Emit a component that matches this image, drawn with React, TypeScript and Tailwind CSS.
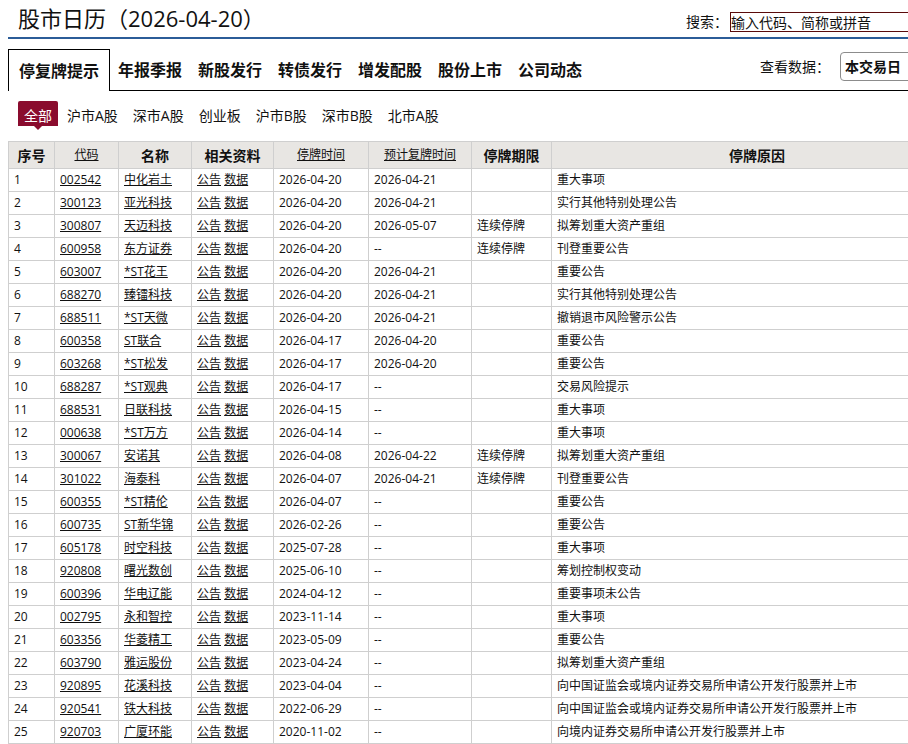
import React from 'react';

type Row = [string, string, string, string, string, string];

const ROWS: Row[] = [
  ['002542', '中化岩土', '2026-04-20', '2026-04-21', '', '重大事项'],
  ['300123', '亚光科技', '2026-04-20', '2026-04-21', '', '实行其他特别处理公告'],
  ['300807', '天迈科技', '2026-04-20', '2026-05-07', '连续停牌', '拟筹划重大资产重组'],
  ['600958', '东方证券', '2026-04-20', '--', '连续停牌', '刊登重要公告'],
  ['603007', '*ST花王', '2026-04-20', '2026-04-21', '', '重要公告'],
  ['688270', '臻镭科技', '2026-04-20', '2026-04-21', '', '实行其他特别处理公告'],
  ['688511', '*ST天微', '2026-04-20', '2026-04-21', '', '撤销退市风险警示公告'],
  ['600358', 'ST联合', '2026-04-17', '2026-04-20', '', '重要公告'],
  ['603268', '*ST松发', '2026-04-17', '2026-04-20', '', '重要公告'],
  ['688287', '*ST观典', '2026-04-17', '--', '', '交易风险提示'],
  ['688531', '日联科技', '2026-04-15', '--', '', '重大事项'],
  ['000638', '*ST万方', '2026-04-14', '--', '', '重大事项'],
  ['300067', '安诺其', '2026-04-08', '2026-04-22', '连续停牌', '拟筹划重大资产重组'],
  ['301022', '海泰科', '2026-04-07', '2026-04-21', '连续停牌', '刊登重要公告'],
  ['600355', '*ST精伦', '2026-04-07', '--', '', '重要公告'],
  ['600735', 'ST新华锦', '2026-02-26', '--', '', '重要公告'],
  ['605178', '时空科技', '2025-07-28', '--', '', '重大事项'],
  ['920808', '曙光数创', '2025-06-10', '--', '', '筹划控制权变动'],
  ['600396', '华电辽能', '2024-04-12', '--', '', '重要事项未公告'],
  ['002795', '永和智控', '2023-11-14', '--', '', '重大事项'],
  ['603356', '华菱精工', '2023-05-09', '--', '', '重要公告'],
  ['603790', '雅运股份', '2023-04-24', '--', '', '拟筹划重大资产重组'],
  ['920895', '花溪科技', '2023-04-04', '--', '', '向中国证监会或境内证券交易所申请公开发行股票并上市'],
  ['920541', '铁大科技', '2022-06-29', '--', '', '向中国证监会或境内证券交易所申请公开发行股票并上市'],
  ['920703', '广厦环能', '2020-11-02', '--', '', '向境内证券交易所申请公开发行股票并上市'],
];

const TABS = ['年报季报', '新股发行', '转债发行', '增发配股', '股份上市', '公司动态'];
const MARKETS = ['沪市A股', '深市A股', '创业板', '沪市B股', '深市B股', '北市A股'];

const th = 'h-[27px] border border-[#cfcfcf] bg-[#e8e6e3] text-center align-middle';
const td = 'h-[23px] border border-[#cfcfcf] px-[5px] text-[12px] align-middle whitespace-nowrap';

const App: React.FC = () => {
  return (
    <div className="h-[744px] w-[908px] overflow-hidden bg-white text-[#111] font-['Open_Sans','Noto_Sans_CJK_SC',sans-serif]">
      <div className="ml-2 w-[954px]">
        {/* title + search */}
        <div className="flex h-[37px] items-end justify-between">
          <h1 className="self-start pl-[10px] text-[22px] leading-[36px] font-normal">股市日历（2026-04-20）</h1>
          <div className="flex items-center pb-[5px] text-[14px]">
            <span className="mr-[2px]">搜索：</span>
            <input
              readOnly
              value="输入代码、简称或拼音"
              className="h-[20px] w-[232px] border border-[#5a0b0b] px-0 text-[14px] leading-[18px] text-[#111] outline-none"
            />
          </div>
        </div>
        <div className="h-[2px] bg-[#2b5c98]" />

        {/* main tabs */}
        <div className="mt-[10px] flex h-[42px] items-start border-b border-black">
          <div className="flex h-[42px] items-center border-x border-t border-black bg-white px-[10px] text-[16px] font-bold">
            停复牌提示
          </div>
          {TABS.map((t) => (
            <div key={t} className="flex h-[41px] items-center px-2 text-[16px] font-bold">
              {t}
            </div>
          ))}
          <div className="ml-auto mr-[22px] mt-[3px] flex items-center text-[14px]">
            <span className="mr-[10px] leading-[29px]">查看数据：</span>
            <div className="flex h-[29px] w-[100px] items-center rounded-[4px] border border-[#8c8c8c] px-[4px] font-bold">
              本交易日
            </div>
          </div>
        </div>

        {/* market filter */}
        <div className="mt-[10px] ml-[10px] flex h-[25px] items-start text-[14px]">
          <div className="relative h-[25px] rounded-t-[2px] bg-[#8a0c2e] px-[6px] pt-[5px] leading-[20px] text-white">
            全部
            <span className="absolute left-1/2 top-full -translate-x-1/2 border-x-[4px] border-t-[4px] border-x-transparent border-t-[#8a0c2e]" />
          </div>
          {MARKETS.map((m) => (
            <div key={m} className="ml-[3px] h-[25px] px-[6px] pt-[5px] leading-[20px]">
              {m}
            </div>
          ))}
        </div>

        {/* table */}
        <table className="mt-[15px] w-[954px] table-fixed border-collapse">
          <colgroup>
            <col className="w-[46px]" />
            <col className="w-[64px]" />
            <col className="w-[73px]" />
            <col className="w-[82px]" />
            <col className="w-[95px]" />
            <col className="w-[103px]" />
            <col className="w-[80px]" />
            <col className="w-[411px]" />
          </colgroup>
          <thead>
            <tr>
              <th className={`${th} text-[14px] font-bold`}>序号</th>
              <th className={`${th} text-[12px] font-normal`}>
                <span className="underline">代码</span>
              </th>
              <th className={`${th} text-[14px] font-bold`}>名称</th>
              <th className={`${th} text-[14px] font-bold`}>相关资料</th>
              <th className={`${th} text-[12px] font-normal`}>
                <span className="underline">停牌时间</span>
              </th>
              <th className={`${th} text-[12px] font-normal`}>
                <span className="underline">预计复牌时间</span>
              </th>
              <th className={`${th} text-[14px] font-bold`}>停牌期限</th>
              <th className={`${th} text-[14px] font-bold`}>停牌原因</th>
            </tr>
          </thead>
          <tbody>
            {ROWS.map((r, i) => (
              <tr key={r[0]}>
                <td className={td}>{i + 1}</td>
                <td className={td}>
                  <a className="underline">{r[0]}</a>
                </td>
                <td className={td}>
                  <a className="underline">{r[1]}</a>
                </td>
                <td className={td}>
                  <a className="underline">公告</a> <a className="underline">数据</a>
                </td>
                <td className={td}>{r[2]}</td>
                <td className={td}>{r[3]}</td>
                <td className={td}>{r[4]}</td>
                <td className={td}>{r[5]}</td>
              </tr>
            ))}
          </tbody>
        </table>
      </div>
    </div>
  );
};

export default App;
